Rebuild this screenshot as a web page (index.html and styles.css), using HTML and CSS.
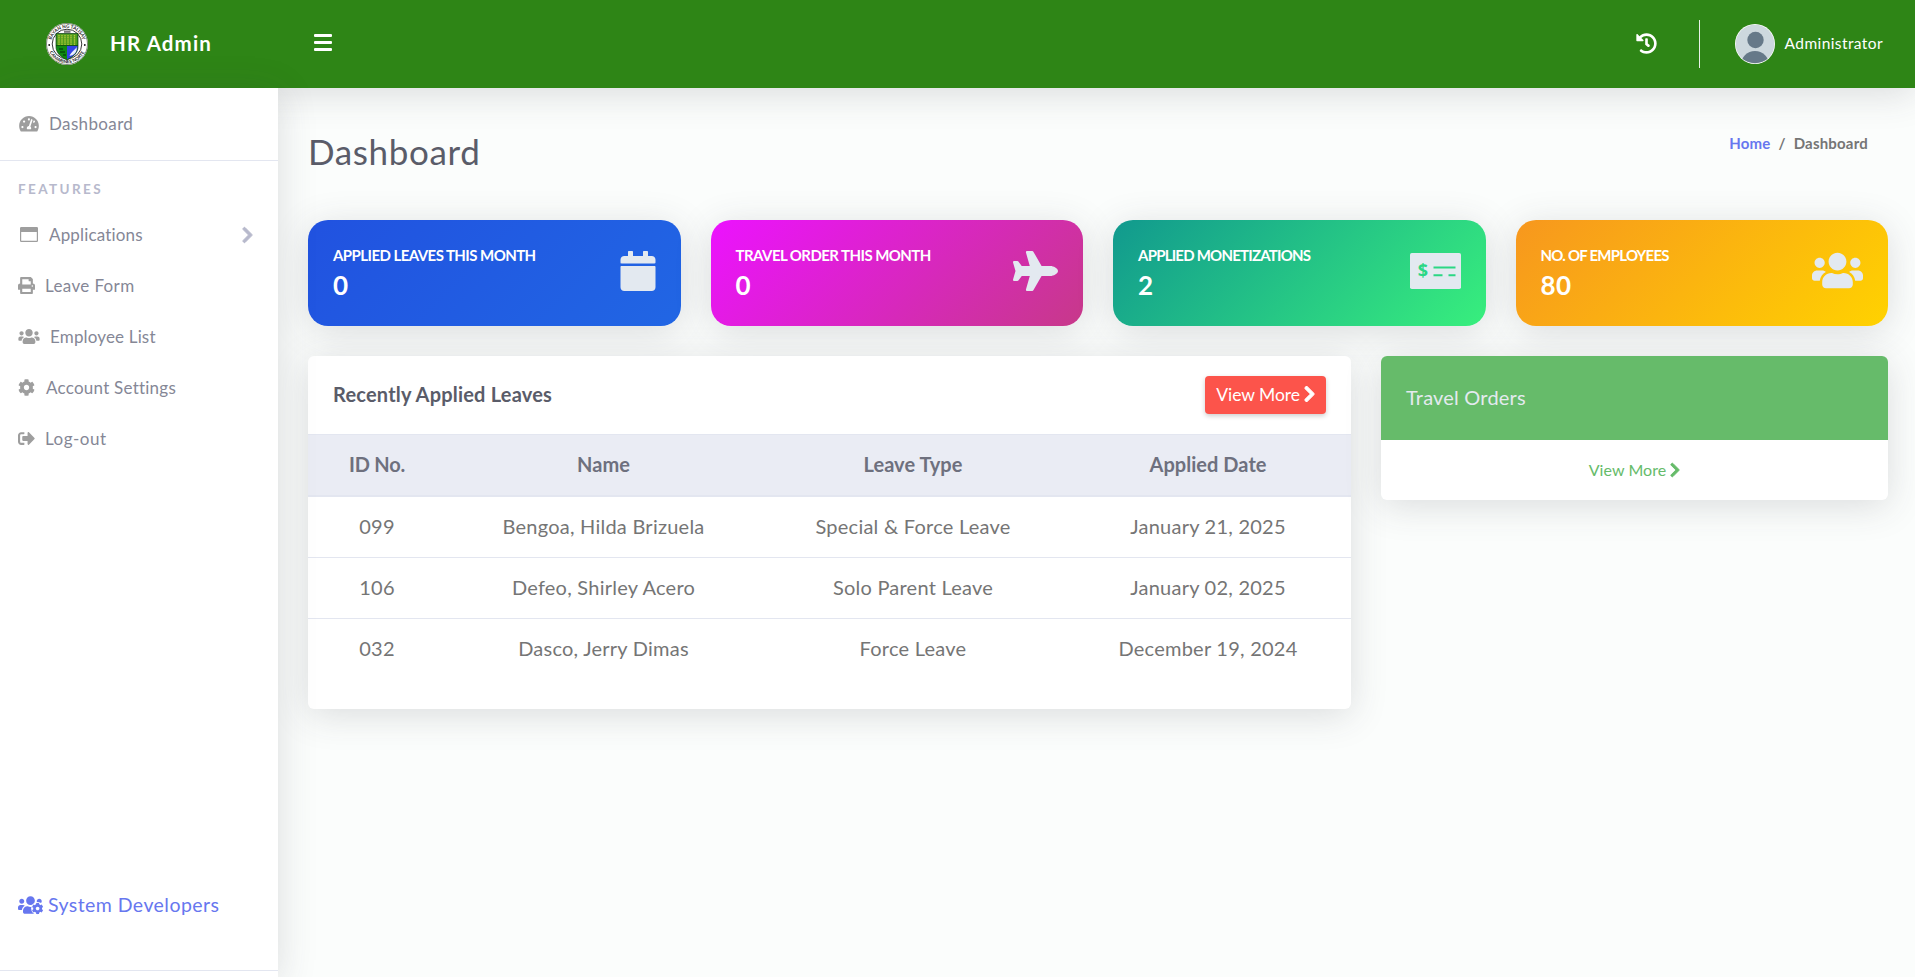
FILE: index.html
```html
<!DOCTYPE html>
<html lang="en">
<head>
<meta charset="utf-8">
<title>HR Admin - Dashboard</title>
<link rel="stylesheet" href="styles.css">
</head>
<body>
<svg class="sprite" aria-hidden="true">
  <symbol id="chevron" viewBox="0 0 320 512"><path d="M285.476 272.971L91.132 467.314c-9.373 9.373-24.569 9.373-33.941 0l-22.667-22.667c-9.357-9.357-9.375-24.522-.04-33.901L188.505 256 34.484 101.255c-9.335-9.379-9.317-24.544.04-33.901l22.667-22.667c9.373-9.373 24.569-9.373 33.941 0L285.475 239.03c9.373 9.372 9.373 24.568.001 33.941z"/></symbol>
  <symbol id="users" viewBox="0 0 640 512"><path d="M96 224c35.3 0 64-28.7 64-64s-28.7-64-64-64-64 28.7-64 64 28.7 64 64 64zm448 0c35.3 0 64-28.7 64-64s-28.7-64-64-64-64 28.7-64 64 28.7 64 64 64zm32 32h-64c-17.6 0-33.5 7.1-45.1 18.6 40.3 22.1 68.9 62 75.1 109.4h66c17.7 0 32-14.3 32-32v-32c0-35.3-28.7-64-64-64zm-256 0c61.9 0 112-50.1 112-112S381.9 32 320 32 208 82.1 208 144s50.1 112 112 112zm76.8 32h-8.3c-20.8 10-43.9 16-68.5 16s-47.6-6-68.5-16h-8.3C179.6 288 128 339.6 128 403.2V432c0 26.5 21.5 48 48 48h288c26.5 0 48-21.5 48-48v-28.8c0-63.6-51.6-115.2-115.2-115.2zm-223.7-13.4C161.5 263.1 145.6 256 128 256H64c-35.3 0-64 28.7-64 64v32c0 17.7 14.3 32 32 32h65.9c6.3-47.4 34.9-87.3 75.2-109.4z"/></symbol>
  <symbol id="cog" viewBox="0 0 512 512"><path d="M487.4 315.7l-42.6-24.6c4.3-23.2 4.3-47 0-70.2l42.6-24.6c4.9-2.8 7.1-8.6 5.5-14-11.1-35.6-30-67.8-54.7-94.6-3.8-4.1-10-5.1-14.8-2.3L380.8 110c-17.9-15.4-38.5-27.3-60.8-35.1V25.8c0-5.6-3.9-10.5-9.4-11.7-36.7-8.2-74.3-7.8-109.2 0-5.5 1.2-9.4 6.1-9.4 11.7V75c-22.2 7.9-42.8 19.8-60.8 35.1L88.7 85.5c-4.9-2.8-11-1.9-14.8 2.3-24.7 26.7-43.6 58.9-54.7 94.6-1.7 5.4.6 11.2 5.5 14L67.3 221c-4.3 23.2-4.3 47 0 70.2l-42.6 24.6c-4.9 2.8-7.1 8.6-5.5 14 11.1 35.6 30 67.8 54.7 94.6 3.8 4.1 10 5.1 14.8 2.3l42.6-24.6c17.9 15.4 38.5 27.3 60.8 35.1v49.2c0 5.6 3.9 10.5 9.4 11.7 36.7 8.2 74.3 7.8 109.2 0 5.5-1.2 9.4-6.1 9.4-11.7v-49.2c22.2-7.9 42.8-19.8 60.8-35.1l42.6 24.6c4.9 2.8 11 1.9 14.8-2.3 24.7-26.7 43.6-58.9 54.7-94.6 1.5-5.5-.7-11.3-5.6-14.1zM256 336c-44.1 0-80-35.9-80-80s35.9-80 80-80 80 35.9 80 80-35.9 80-80 80z"/></symbol>
</svg>

<header class="topbar">
  <a class="brand" href="#">
    <svg class="seal" viewBox="0 0 42 42">
      <circle cx="21" cy="21" r="21" fill="#fff"/>
      <circle cx="21" cy="21" r="20.5" fill="none" stroke="#6d7a68" stroke-width=".9"/>
      <circle cx="21" cy="21" r="14.8" fill="none" stroke="#222" stroke-width=".9"/>
      <defs><path id="arcTop" d="M4.900 21a16.100 16.100 0 0 1 32.200 0"/><path id="arcBottom" d="M1.700 21a19.300 19.300 0 0 0 38.600 0"/></defs>
      <text class="seal-text"><textPath href="#arcTop" startOffset="50%">BAYAN NG TALISAY</textPath></text>
      <text class="seal-text"><textPath href="#arcBottom" startOffset="50%">CAMARINES NORTE</textPath></text>
      <circle cx="3.200" cy="22" r=".9" fill="#111"/><circle cx="38.800" cy="22" r=".9" fill="#111"/>
      <rect x="18" y="7.500" width="6.500" height="2.300" fill="#777"/>
      <path d="M10 10.500h22v13c0 6-4 10-11 13.500-7-3.500-11-7.500-11-13.500z" fill="#0f8a12"/>
      <path d="M10.500 11h21v11.500h-21z" fill="#4f9c1c"/>
      <path d="M13 12v10M16 12v10M19 12v10M22 12v10M25 12v10M28.500 12v10" stroke="#b3c93a" stroke-width="1.300" stroke-dasharray="1.500 .6"/>
      <path d="M21 22.500h10.800c.3 6-3 10-10.800 14z" fill="#3343e6"/>
      <path d="M30.500 24c-1 3-5 4-7 9 5-1 8-4 7-9z" fill="#e9eefc"/>
      <path d="M10 22.500h22" stroke="#0a4a0a" stroke-width=".8"/>
      <path d="M13 26h4M14 29h5M17 32h3" stroke="#064f0d" stroke-width="1.300"/>
      <path d="M10 10.500h22v13c0 6-4 10-11 13.500-7-3.500-11-7.500-11-13.500z" fill="none" stroke="#123c14" stroke-width=".7"/>
    </svg>
    <span class="brand-name">HR Admin</span>
  </a>
  <button class="menu-toggle" aria-label="Toggle menu"><i></i><i></i><i></i></button>
  <div class="topbar-right">
    <svg class="history" viewBox="0 0 512 512"><path d="M504 255.531c.253 136.640-111.180 248.372-247.820 248.468-59.015.042-113.223-20.530-155.822-54.911-11.077-8.940-11.905-25.541-1.839-35.607l11.267-11.267c8.609-8.609 22.353-9.551 31.891-1.984C173.062 425.135 212.781 440 256 440c101.705 0 184-82.311 184-184 0-101.705-82.311-184-184-184-48.814 0-93.149 18.969-126.068 49.932l50.754 50.754c10.080 10.080 2.941 27.314-11.313 27.314H24c-8.837 0-16-7.163-16-16V38.627c0-14.254 17.234-21.393 27.314-11.314l49.372 49.372C129.209 34.136 189.552 8 256 8c136.810 0 247.747 110.780 248 247.531zm-180.912 78.784l9.823-12.630c8.138-10.463 6.253-25.542-4.210-33.679L288 256.349V152c0-13.255-10.745-24-24-24h-16c-13.255 0-24 10.745-24 24v135.651l65.409 50.874c10.463 8.137 25.541 6.253 33.679-4.210z"/></svg>
    <div class="topbar-divider"></div>
    <a class="user" href="#">
      <svg class="avatar" viewBox="0 0 40 40">
        <defs><clipPath id="avatarClip"><circle cx="20" cy="20" r="19.300"/></clipPath></defs>
        <circle cx="20" cy="20" r="20" fill="#fff"/>
        <circle cx="20" cy="20" r="19.300" fill="#cdd8de"/>
        <g clip-path="url(#avatarClip)" fill="#667989"><circle cx="20.500" cy="16" r="8.200"/><circle cx="20" cy="41" r="14"/></g>
      </svg>
      <span>Administrator</span>
    </a>
  </div>
</header>

<div class="wrapper">
  <nav class="sidebar">
    <a class="nav-item first" href="#"><svg class="ic-gauge" viewBox="0 0 576 512"><path d="M288 32C128.940 32 0 160.940 0 320c0 52.800 14.250 102.260 39.060 144.800 5.610 9.620 16.300 15.200 27.440 15.200h443c11.140 0 21.830-5.580 27.440-15.200C561.750 422.260 576 372.800 576 320c0-159.060-128.940-288-288-288zm0 64c14.710 0 26.580 10.130 30.320 23.650-1.110 2.260-2.640 4.230-3.450 6.670l-9.220 27.670c-5.130 3.490-10.970 6.010-17.640 6.010-17.670 0-32-14.330-32-32S270.330 96 288 96zM96 384c-17.670 0-32-14.330-32-32s14.330-32 32-32 32 14.330 32 32-14.330 32-32 32zm48-160c-17.670 0-32-14.330-32-32s14.330-32 32-32 32 14.330 32 32-14.330 32-32 32zm246.770-72.410l-61.330 184C343.130 347.330 352 364.540 352 384c0 11.720-3.380 22.550-8.880 32H232.880c-5.500-9.450-8.880-20.280-8.880-32 0-33.940 26.500-61.430 59.900-63.590l61.340-184.010c4.170-12.560 17.730-19.450 30.360-15.170 12.570 4.190 19.350 17.790 15.170 30.360zm14.660 57.200l15.520-46.550c3.470-1.290 7.130-2.230 11.050-2.230 17.670 0 32 14.330 32 32s-14.330 32-32 32c-11.380-.01-20.890-6.280-26.570-15.220zM480 384c-17.670 0-32-14.330-32-32s14.330-32 32-32 32 14.330 32 32-14.330 32-32 32z"/></svg><span class="wide">Dashboard</span></a>
    <h2 class="nav-heading">Features</h2>
    <a class="nav-item" href="#"><svg class="ic-window" viewBox="0 0 18 15"><path fill-rule="evenodd" d="M1.200 0h15.600A1.200 1.200 0 0 1 18 1.200v12.600a1.200 1.200 0 0 1-1.200 1.200H1.200A1.200 1.200 0 0 1 0 13.800V1.200A1.200 1.200 0 0 1 1.200 0zM1.200 5v8.800h15.600V5z"/></svg><span>Applications</span><svg class="nav-arrow"><use href="#chevron"/></svg></a>
    <a class="nav-item" href="#"><svg class="ic-print" viewBox="0 0 512 512"><path d="M448 192V77.250c0-8.490-3.370-16.620-9.370-22.630L393.370 9.370c-6-6-14.140-9.370-22.630-9.370H96C78.330 0 64 14.330 64 32v160c-35.350 0-64 28.650-64 64v112c0 8.840 7.160 16 16 16h48v96c0 17.670 14.330 32 32 32h320c17.670 0 32-14.330 32-32v-96h48c8.840 0 16-7.160 16-16V256c0-35.350-28.650-64-64-64zm-64 256H128v-96h256v96zm0-224H128V64h192v48c0 8.840 7.160 16 16 16h48v96zm48 72c-13.250 0-24-10.750-24-24 0-13.260 10.750-24 24-24s24 10.740 24 24c0 13.250-10.750 24-24 24z"/></svg><span class="wide">Leave Form</span></a>
    <a class="nav-item" href="#"><svg class="ic-users"><use href="#users"/></svg><span>Employee List</span></a>
    <a class="nav-item" href="#"><svg class="ic-cog"><use href="#cog"/></svg><span class="settings">Account Settings</span></a>
    <a class="nav-item" href="#"><svg class="ic-out" viewBox="0 0 512 512"><path d="M497 273L329 441c-15 15-41 4.500-41-17v-96H152c-13.300 0-24-10.700-24-24v-96c0-13.300 10.700-24 24-24h136V88c0-21.400 25.900-32 41-17l168 168c9.300 9.400 9.300 24.600 0 34zM192 436v-40c0-6.600-5.400-12-12-12H96c-17.700 0-32-14.300-32-32V160c0-17.700 14.300-32 32-32h84c6.600 0 12-5.400 12-12V76c0-6.600-5.400-12-12-12H96c-53 0-96 43-96 96v192c0 53 43 96 96 96h84c6.600 0 12-5.400 12-12z"/></svg><span class="logout">Log-out</span></a>
    <a class="developers" href="#">
      <svg class="ic-dev" viewBox="0 0 640 512">
        <defs><mask id="cogGap"><rect width="640" height="512" fill="#fff"/><circle cx="502" cy="346" r="166" fill="#000"/></mask></defs>
        <g mask="url(#cogGap)"><use href="#users" width="640" height="512"/></g>
        <svg x="352" y="180" width="300" height="332" viewBox="0 0 512 512"><use href="#cog" width="512" height="512"/></svg>
      </svg><span>System Developers</span></a>
  </nav>

  <main class="content">
    <div class="page-head">
      <h1>Dashboard</h1>
      <ol class="breadcrumb"><li><a href="#">Home</a></li><li class="sep">/</li><li>Dashboard</li></ol>
    </div>

    <section class="stats">
      <div class="stat blue"><div><h3>Applied Leaves this month</h3><p>0</p></div>
        <svg class="ic-calendar" viewBox="0 0 448 512"><path d="M12 192h424c6.600 0 12 5.400 12 12v260c0 26.500-21.500 48-48 48H48c-26.500 0-48-21.500-48-48V204c0-6.600 5.400-12 12-12zm436-44v-36c0-26.500-21.500-48-48-48h-48V12c0-6.600-5.400-12-12-12h-40c-6.600 0-12 5.400-12 12v52H160V12c0-6.600-5.400-12-12-12h-40c-6.600 0-12 5.400-12 12v52H48C21.500 64 0 85.500 0 112v36c0 6.600 5.400 12 12 12h424c6.600 0 12-5.400 12-12z"/></svg></div>
      <div class="stat pink"><div><h3>Travel Order this month</h3><p>0</p></div>
        <svg class="ic-plane" viewBox="0 0 576 512"><path d="M480 192H365.710L260.610 8.060A16.014 16.014 0 0 0 246.710 0h-65.500c-10.630 0-18.300 10.170-15.380 20.390L214.860 192H112l-43.200-57.600c-3.020-4.030-7.770-6.400-12.800-6.400H16.010C5.600 128-2.040 137.780.49 147.880L32 256 .49 364.120C-2.040 374.220 5.600 384 16.010 384H56c5.040 0 9.780-2.370 12.800-6.400L112 320h102.860l-49.030 171.600c-2.920 10.220 4.750 20.400 15.380 20.400h65.500c5.740 0 11.040-3.080 13.890-8.060L365.710 320H480c35.350 0 96-28.650 96-64s-60.650-64-96-64z"/></svg></div>
      <div class="stat green"><div><h3 class="tighter">Applied Monetizations</h3><p>2</p></div>
        <svg class="ic-check" viewBox="0 0 51 36"><rect width="51" height="36" rx="1.800"/><text x="13" y="23.500">$</text><path class="lines" d="M23.500 14.500h22M23.500 22.200h9M38.500 22.200h7"/></svg></div>
      <div class="stat orange"><div><h3 class="tighter">No. of Employees</h3><p>80</p></div>
        <svg class="ic-team"><use href="#users"/></svg></div>
    </section>

    <section class="panels">
      <div class="card leaves">
        <div class="card-head"><h2>Recently Applied Leaves</h2><a class="btn" href="#">View More <svg><use href="#chevron"/></svg></a></div>
        <table>
          <colgroup><col class="c1"><col class="c2"><col class="c3"><col class="c4"></colgroup>
          <thead><tr><th>ID No.</th><th>Name</th><th>Leave Type</th><th>Applied Date</th></tr></thead>
          <tbody>
            <tr><td>099</td><td>Bengoa, Hilda Brizuela</td><td>Special &amp; Force Leave</td><td>January 21, 2025</td></tr>
            <tr><td>106</td><td>Defeo, Shirley Acero</td><td>Solo Parent Leave</td><td>January 02, 2025</td></tr>
            <tr><td>032</td><td>Dasco, Jerry Dimas</td><td>Force Leave</td><td>December 19, 2024</td></tr>
          </tbody>
        </table>
      </div>
      <div class="card travel">
        <div class="travel-head">Travel Orders</div>
        <a class="travel-more" href="#">View More <svg><use href="#chevron"/></svg></a>
      </div>
    </section>
  </main>
</div>
</body>
</html>
```
FILE: styles.css
```css
* { box-sizing: border-box; margin: 0; padding: 0; }
html, body { height: 100%; }
body {
  display: flex;
  flex-direction: column;
  overflow: hidden;
  background: #fbfdfc;
  color: #757575;
  font-family: Lato, "Open Sans", sans-serif;
  font-variant-ligatures: none;
}
a { color: inherit; text-decoration: none; }
svg { display: block; flex: none; fill: currentColor; }
.sprite { position: absolute; width: 0; height: 0; }

/* Top bar */
.topbar {
  display: flex;
  align-items: center;
  flex: none;
  height: 88px;
  padding-right: 32px;
  background: #2e8516;
  color: #fff;
  box-shadow: 0 6px 36px rgba(58, 59, 69, .17);
}
.brand { display: flex; align-items: center; width: 314px; padding-left: 46px; gap: 22px; }
.seal { width: 42px; height: 42px; }
.seal-text { font: 700 4.600px Lato, sans-serif; text-anchor: middle; fill: #222; }
.brand-name { font-size: 20.500px; font-weight: 700; line-height: 24px; letter-spacing: 1.130px; margin-top: -2px; }
.menu-toggle { display: flex; flex-direction: column; gap: 3.500px; width: 18px; background: none; border: 0; margin-top: -3px; }
.menu-toggle i { height: 3.300px; width: 18px; border-radius: 1px; background: #fff; }
.topbar-right { display: flex; align-items: center; margin-left: auto; }
.history { width: 21px; height: 21px; margin-right: 42px; margin-top: -2px; }
.topbar-divider { width: 1px; height: 48px; background: #e9f1e7; margin-right: 35px; }
.user { display: flex; align-items: center; gap: 10px; font-size: 15.500px; letter-spacing: .4px; line-height: 20px; }
.user span { margin-top: -2px; }
.avatar { width: 40px; height: 40px; }

.wrapper { display: flex; flex: 1; min-height: 0; }

/* Sidebar */
.sidebar {
  display: flex;
  flex-direction: column;
  width: 278px;
  flex: none;
  padding-bottom: 6px;
  background: #fff;
  color: #858796;
  z-index: 1;
  box-shadow: 0 6px 36px rgba(58, 59, 69, .17);
}
.sidebar::after { content: ""; margin-top: 40px; border-top: 1px solid #e3e6f0; }
.nav-item { display: flex; align-items: center; height: 51px; padding: 0 24px 0 18px; font-size: 17px; line-height: 20px; letter-spacing: .16px; }
.nav-item span { margin-left: 10px; }
.nav-item .wide { letter-spacing: .36px; }
.nav-item .settings { margin-left: 11px; letter-spacing: .24px; }
.nav-item .logout { letter-spacing: .5px; }
.nav-item svg { color: #9e9e9e; }
.first { height: 73px; border-bottom: 1px solid #e3e6f0; }
.nav-heading { margin: 20px 0 12px 18px; font-size: 13.500px; line-height: 16px; letter-spacing: 2.400px; text-transform: uppercase; color: #b7b9cc; }
.ic-gauge { width: 20px; height: 17.500px; margin-left: 1px; }
.ic-window { width: 18px; height: 15px; margin: 0 1px 0 2px; }
.nav-item .nav-arrow { width: 13px; height: 18px; margin-left: auto; color: #b7b9cc; stroke: #b7b9cc; stroke-width: 26px; }
.ic-print, .ic-cog, .ic-out { width: 17px; height: 17px; }
.ic-users { width: 22px; height: 17px; }
.developers { display: flex; align-items: center; gap: 5px; height: 50px; margin-top: auto; padding-left: 18px; font-size: 19.500px; line-height: 24px; letter-spacing: .44px; color: #6777ef; }
.ic-dev { width: 25px; height: 20px; }

/* Page */
.content { flex: 1; padding: 0 27px 0 30px; }
.page-head { display: flex; justify-content: space-between; height: 132px; padding: 42px 20px 0 0; }
h1 { font-size: 35px; font-weight: 400; line-height: 42px; letter-spacing: .63px; color: #5a5c69; }
.breadcrumb { display: flex; list-style: none; margin-top: 4px; font-size: 15px; font-weight: 700; line-height: 18px; letter-spacing: .2px; }
.breadcrumb a { color: #6777ef; }
.sep { padding: 0 8px; }

.stats { display: grid; grid-template-columns: repeat(4, 1fr); gap: 30px; }
.stat {
  display: flex;
  justify-content: space-between;
  align-items: center;
  height: 106px;
  padding: 0 25px;
  border-radius: 20px;
  color: #fff;
  box-shadow: 0 6px 36px rgba(58, 59, 69, .17);
}
.stat h3 { font-size: 15px; line-height: 20px; letter-spacing: -.56px; text-transform: uppercase; }
.stat .tighter { letter-spacing: -.78px; }
.stat p { font-size: 26px; font-weight: 700; line-height: 32px; letter-spacing: .4px; margin-top: 4px; }
.stat svg { color: #e3e9f0; margin-top: -5px; }
.blue { background: linear-gradient(135deg, #2152e0, #2166e4); }
.pink { background: linear-gradient(135deg, #ec12ff, #c73989); }
.green { background: linear-gradient(135deg, #11998e, #38ef7d); }
.orange { background: linear-gradient(135deg, #f7971e, #ffd200); }
.ic-calendar { width: 36px; height: 40px; }
.ic-plane { width: 45px; height: 40px; }
.ic-check { width: 51px; height: 36px; }
.ic-check text { font: 700 18px "Open Sans", sans-serif; text-anchor: middle; fill: #2bd784; }
.ic-check .lines { fill: none; stroke: #2bd784; stroke-width: 2; }
.ic-team { width: 51px; height: 41px; }

.panels { display: grid; grid-template-columns: 1043px 507px; gap: 30px; align-items: start; margin-top: 30px; }
.card { background: #fff; border-radius: 6px; overflow: hidden; box-shadow: 0 6px 36px rgba(58, 59, 69, .17); }
.leaves { height: 353px; }
.card-head { display: flex; align-items: center; justify-content: space-between; height: 78px; padding: 0 25px; }
.card-head h2 { margin-top: -2px; font-size: 20px; line-height: 24px; letter-spacing: .2px; color: #5a5c69; }
.btn { display: flex; align-items: center; gap: 4px; height: 38px; padding: 0 11px 2px; border-radius: 4px; background: #fc544b; color: #fff; font-size: 17.500px; letter-spacing: -.05px; box-shadow: 0 2px 5px rgba(0, 0, 0, .2); }
.btn svg { width: 11px; height: 18px; stroke: currentColor; stroke-width: 30px; }

table { width: 100%; table-layout: fixed; border-collapse: separate; border-spacing: 0; text-align: center; font-size: 20px; line-height: 24px; letter-spacing: .24px; }
.c1 { width: 138px; }
.c2 { width: 315px; }
.c3 { width: 304px; }
th, td { padding-bottom: 3px; }
th { height: 63px; background: #eaecf4; border-top: 1px solid #e3e6f0; border-bottom: 2px solid #e3e6f0; color: #6e707e; letter-spacing: .04px; }
th:first-child { letter-spacing: -.2px; }
td { height: 61px; border-top: 1px solid #e3e6f0; }
tbody tr:first-child td { height: 60px; border-top: 0; }

.travel-head { display: flex; align-items: center; height: 84px; padding: 0 25px 3px; background: #66bb6a; color: #e3eaef; font-size: 20px; letter-spacing: .2px; }
.travel-more { display: flex; align-items: center; justify-content: center; gap: 4px; height: 60px; padding-bottom: 1px; color: #66bb6a; font-size: 16px; letter-spacing: .08px; }
.travel-more svg { width: 10px; height: 16px; stroke: currentColor; stroke-width: 30px; }
```
